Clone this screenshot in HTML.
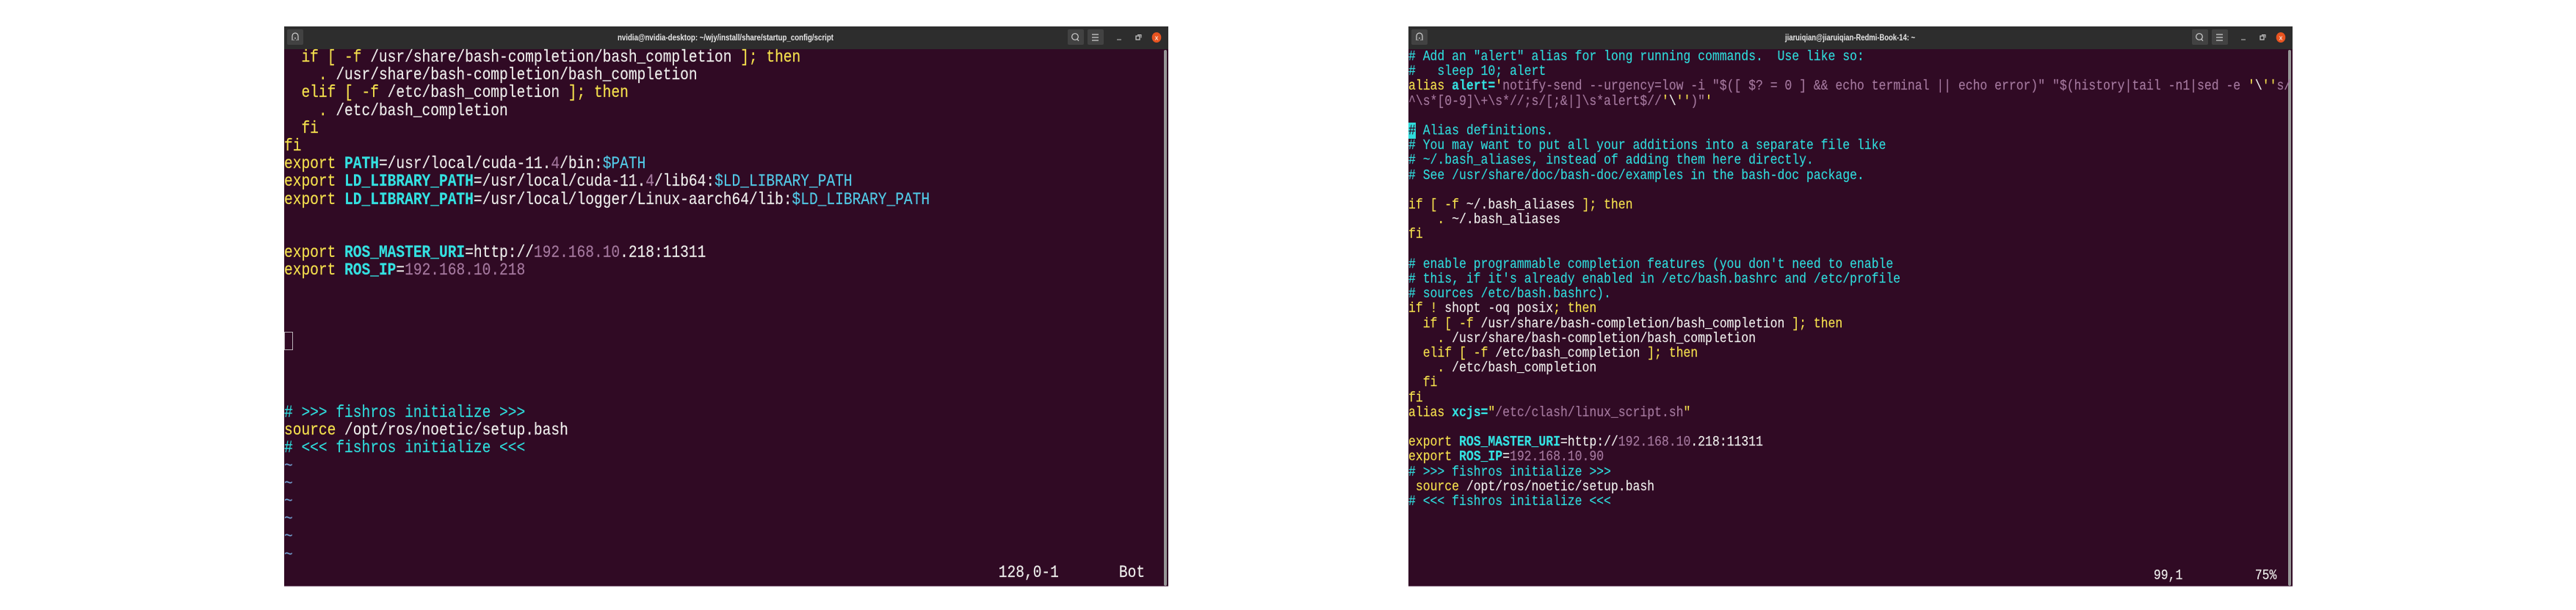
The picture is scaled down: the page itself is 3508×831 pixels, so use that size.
<!DOCTYPE html>
<html><head><meta charset="utf-8"><style>
html,body{margin:0;padding:0;width:3508px;height:831px;background:#fff;overflow:hidden}
.w{position:absolute;top:36px;width:1204px;height:763px;background:#300a24;box-sizing:border-box;border-bottom:1px solid #7d5f75;overflow:hidden}
.bar{position:absolute;left:0;top:0;width:1204px;height:31px;background:#2d2d2d}
.btn{position:absolute;top:4px;width:22px;height:21px;background:#424242;border-radius:2px}
svg{position:absolute;left:0;top:0}
.sb{position:absolute;left:1198px;top:32px;width:4px;height:730px;background:#979797;border-radius:2px}
pre{position:absolute;left:0;margin:0;font-family:"Liberation Mono",monospace;color:#eeeeec;transform-origin:0 0;white-space:pre;filter:blur(.35px);-webkit-text-stroke:.15px currentColor}
#a{top:31px;font-size:23.4px;line-height:24.2px;transform:scaleX(.835)}
#b{top:31px;font-size:19.7px;line-height:20.2px;transform:scaleX(.834)}
i{font-style:normal}
.y{color:#f4e04d}.c{color:#2fdcdc}.k{color:#34e2e2;font-weight:bold}.p{color:#a5799f}.v{color:#52cbe8}.t{color:#729fcf}
.cur{background:#2fdcdc;color:#300a24}
.box{position:absolute;left:0;top:416px;width:12px;height:25px;box-sizing:border-box;border:1px solid #b9b0b6}
</style></head><body>

<div class="w" style="left:387px">
<div class="bar"></div>
<div class="btn" style="left:4px"></div><div class="btn" style="left:1067px"></div><div class="btn" style="left:1094px"></div>
<svg width="1204" height="31" fill="none" stroke="#cfcfcf" stroke-width="1.2">
<path d="M11 19v-6a4 4 0 0 1 8 0v6M13 19v-1M17 19v-1M15 15v2"/>
<circle cx="1077" cy="14" r="4.3"/><path d="M1080 17.5l2 2.2"/>
<path d="M1100 11h9M1100 15h9M1100 19h9"/>
<path d="M1134 18h6" stroke="#aaa"/><rect x="1160" y="13" width="5" height="5"/><path d="M1162 11.5h5v4" stroke-width="1"/>
<text x="454" y="19" font-family="Liberation Sans,sans-serif" font-weight="bold" font-size="12" fill="#e6e6e6" stroke="none" textLength="294" lengthAdjust="spacingAndGlyphs" style="filter:blur(.25px)">nvidia@nvidia-desktop: ~/wjy/install/share/startup_config/script</text>
<ellipse cx="1188" cy="15" rx="6.3" ry="7" fill="#e95420" stroke="none"/>
<text x="1188" y="18.5" text-anchor="middle" font-family="Liberation Sans,sans-serif" font-weight="bold" font-size="9" fill="#f5d5c8" stroke="none">x</text>
</svg>
<div class="sb"></div>
<div class="box"></div>
<pre id="a"><i class="y">  if [ -f </i>/usr/share/bash-completion/bash_completion<i class="y"> ]; then</i>
    <i class="y">.</i> /usr/share/bash-completion/bash_completion
<i class="y">  elif [ -f </i>/etc/bash_completion<i class="y"> ]; then</i>
    <i class="y">.</i> /etc/bash_completion
<i class="y">  fi</i>
<i class="y">fi</i>
<i class="y">export</i> <i class="k">PATH</i>=/usr/local/cuda-11.<i class="p">4</i>/bin:<i class="v">$PATH</i>
<i class="y">export</i> <i class="k">LD_LIBRARY_PATH</i>=/usr/local/cuda-11.<i class="p">4</i>/lib64:<i class="v">$LD_LIBRARY_PATH</i>
<i class="y">export</i> <i class="k">LD_LIBRARY_PATH</i>=/usr/local/logger/Linux-aarch64/lib:<i class="v">$LD_LIBRARY_PATH</i>


<i class="y">export</i> <i class="k">ROS_MASTER_URI</i>=http://<i class="p">192.168.10</i>.218:11311
<i class="y">export</i> <i class="k">ROS_IP</i>=<i class="p">192.168.10.218</i>







<i class="c"># &gt;&gt;&gt; fishros initialize &gt;&gt;&gt;</i>
<i class="y">source</i> /opt/ros/noetic/setup.bash
<i class="c"># &lt;&lt;&lt; fishros initialize &lt;&lt;&lt;</i>
<i class="t">~</i>
<i class="t">~</i>
<i class="t">~</i>
<i class="t">~</i>
<i class="t">~</i>
<i class="t">~</i>
                                                                                   128,0-1       Bot</pre>
</div>

<div class="w" style="left:1918px">
<div class="bar"></div>
<div class="btn" style="left:4px"></div><div class="btn" style="left:1067px"></div><div class="btn" style="left:1094px"></div>
<svg width="1204" height="31" fill="none" stroke="#cfcfcf" stroke-width="1.2">
<path d="M11 19v-6a4 4 0 0 1 8 0v6M13 19v-1M17 19v-1M15 15v2"/>
<circle cx="1077" cy="14" r="4.3"/><path d="M1080 17.5l2 2.2"/>
<path d="M1100 11h9M1100 15h9M1100 19h9"/>
<path d="M1134 18h6" stroke="#aaa"/><rect x="1160" y="13" width="5" height="5"/><path d="M1162 11.5h5v4" stroke-width="1"/>
<text x="513" y="19" font-family="Liberation Sans,sans-serif" font-weight="bold" font-size="12" fill="#e6e6e6" stroke="none" textLength="177" lengthAdjust="spacingAndGlyphs" style="filter:blur(.25px)">jiaruiqian@jiaruiqian-Redmi-Book-14: ~</text>
<ellipse cx="1188" cy="15" rx="6.3" ry="7" fill="#e95420" stroke="none"/>
<text x="1188" y="18.5" text-anchor="middle" font-family="Liberation Sans,sans-serif" font-weight="bold" font-size="9" fill="#f5d5c8" stroke="none">x</text>
</svg>
<div class="sb"></div>
<pre id="b"><i class="c"># Add an "alert" alias for long running commands.  Use like so:</i>
<i class="c">#   sleep 10; alert</i>
<i class="y">alias</i> <i class="k">alert=</i><i class="y">'</i><i class="p">notify-send --urgency=low -i "$([ $? = 0 ] &amp;&amp; echo terminal || echo error)" "$(history|tail -n1|sed -e </i><i class="y">'</i>\<i class="y">''</i><i class="p">s/</i>
<i class="p">^\s*[0-9]\+\s*//;s/[;&amp;|]\s*alert$//</i><i class="y">'</i>\<i class="y">''</i><i class="p">)"</i><i class="y">'</i>

<i class="cur">#</i><i class="c"> Alias definitions.</i>
<i class="c"># You may want to put all your additions into a separate file like</i>
<i class="c"># ~/.bash_aliases, instead of adding them here directly.</i>
<i class="c"># See /usr/share/doc/bash-doc/examples in the bash-doc package.</i>

<i class="y">if [ -f </i>~/.bash_aliases<i class="y"> ]; then</i>
    <i class="y">.</i> ~/.bash_aliases
<i class="y">fi</i>

<i class="c"># enable programmable completion features (you don't need to enable</i>
<i class="c"># this, if it's already enabled in /etc/bash.bashrc and /etc/profile</i>
<i class="c"># sources /etc/bash.bashrc).</i>
<i class="y">if !</i> shopt -oq posix<i class="y">; then</i>
<i class="y">  if [ -f </i>/usr/share/bash-completion/bash_completion<i class="y"> ]; then</i>
    <i class="y">.</i> /usr/share/bash-completion/bash_completion
<i class="y">  elif [ -f </i>/etc/bash_completion<i class="y"> ]; then</i>
    <i class="y">.</i> /etc/bash_completion
<i class="y">  fi</i>
<i class="y">fi</i>
<i class="y">alias</i> <i class="k">xcjs=</i><i class="y">"</i><i class="p">/etc/clash/linux_script.sh</i><i class="y">"</i>

<i class="y">export</i> <i class="k">ROS_MASTER_URI</i>=http://<i class="p">192.168.10</i>.218:11311
<i class="y">export</i> <i class="k">ROS_IP</i>=<i class="p">192.168.10.90</i>
<i class="c"># &gt;&gt;&gt; fishros initialize &gt;&gt;&gt;</i>
 <i class="y">source</i> /opt/ros/noetic/setup.bash
<i class="c"># &lt;&lt;&lt; fishros initialize &lt;&lt;&lt;</i>




                                                                                                       99,1          75%</pre>
</div>
</body></html>
